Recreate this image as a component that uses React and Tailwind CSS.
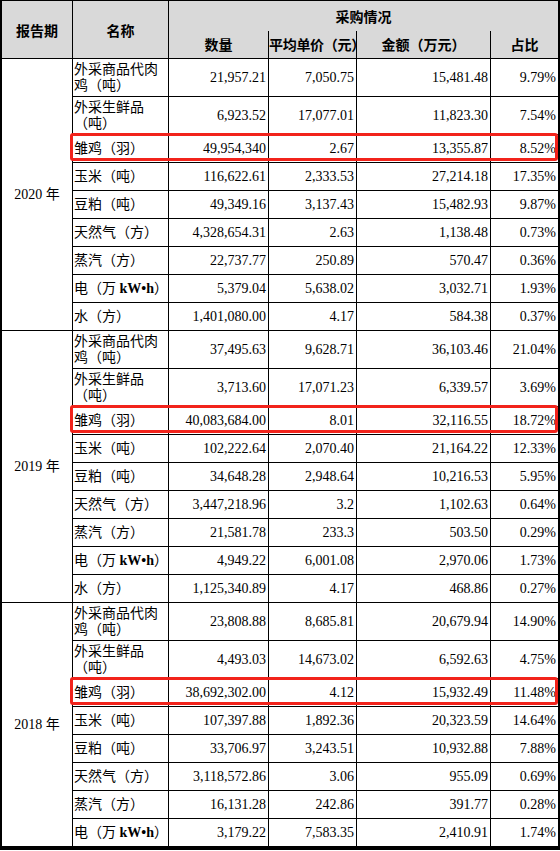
import React from "react";

const blocks = [
  {
    year: "2020 年",
    rows: [
      ["外采商品代肉", "鸡（吨）", "21,957.21", "7,050.75", "15,481.48", "9.79%"],
      ["外采生鲜品", "（吨）", "6,923.52", "17,077.01", "11,823.30", "7.54%"],
      ["雏鸡（羽）", null, "49,954,340", "2.67", "13,355.87", "8.52%", true],
      ["玉米（吨）", null, "116,622.61", "2,333.53", "27,214.18", "17.35%"],
      ["豆粕（吨）", null, "49,349.16", "3,137.43", "15,482.93", "9.87%"],
      ["天然气（方）", null, "4,328,654.31", "2.63", "1,138.48", "0.73%"],
      ["蒸汽（方）", null, "22,737.77", "250.89", "570.47", "0.36%"],
      ["ELEC", null, "5,379.04", "5,638.02", "3,032.71", "1.93%"],
      ["水（方）", null, "1,401,080.00", "4.17", "584.38", "0.37%"],
    ],
  },
  {
    year: "2019 年",
    rows: [
      ["外采商品代肉", "鸡（吨）", "37,495.63", "9,628.71", "36,103.46", "21.04%"],
      ["外采生鲜品", "（吨）", "3,713.60", "17,071.23", "6,339.57", "3.69%"],
      ["雏鸡（羽）", null, "40,083,684.00", "8.01", "32,116.55", "18.72%", true],
      ["玉米（吨）", null, "102,222.64", "2,070.40", "21,164.22", "12.33%"],
      ["豆粕（吨）", null, "34,648.28", "2,948.64", "10,216.53", "5.95%"],
      ["天然气（方）", null, "3,447,218.96", "3.2", "1,102.63", "0.64%"],
      ["蒸汽（方）", null, "21,581.78", "233.3", "503.50", "0.29%"],
      ["ELEC", null, "4,949.22", "6,001.08", "2,970.06", "1.73%"],
      ["水（方）", null, "1,125,340.89", "4.17", "468.86", "0.27%"],
    ],
  },
  {
    year: "2018 年",
    rows: [
      ["外采商品代肉", "鸡（吨）", "23,808.88", "8,685.81", "20,679.94", "14.90%"],
      ["外采生鲜品", "（吨）", "4,493.03", "14,673.02", "6,592.63", "4.75%"],
      ["雏鸡（羽）", null, "38,692,302.00", "4.12", "15,932.49", "11.48%", true],
      ["玉米（吨）", null, "107,397.88", "1,892.36", "20,323.59", "14.64%"],
      ["豆粕（吨）", null, "33,706.97", "3,243.51", "10,932.88", "7.88%"],
      ["天然气（方）", null, "3,118,572.86", "3.06", "955.09", "0.69%"],
      ["蒸汽（方）", null, "16,131.28", "242.86", "391.77", "0.28%"],
      ["ELEC", null, "3,179.22", "7,583.35", "2,410.91", "1.74%"],
    ],
  },
];

const cell = "border border-black p-0";
const num = "border border-black pr-[2px] pl-0 text-right align-middle whitespace-nowrap";

function Name({ a, b, hl }) {
  let content;
  if (a === "ELEC") {
    content = (
      <span>
        电（万 <span className="font-bold">kW•h</span>）
      </span>
    );
  } else if (b) {
    content = (
      <span>
        {a}
        <br />
        {b}
      </span>
    );
  } else {
    content = a;
  }
  return (
    <td className={`${cell} relative pl-[1px] text-left align-middle leading-[16px] whitespace-nowrap`}>
      {content}
      {hl && (
        <div className="absolute left-[-3px] top-[-2px] h-[28px] w-[488px] rounded-[3px] border-[3px] border-[#f2231b] pointer-events-none" />
      )}
    </td>
  );
}

export default function App() {
  return (
    <div className="w-[560px] h-[851px] bg-white overflow-hidden">
      <div className="w-[560px] border-l border-r-2 border-b-[3px] border-black">
        <table
          className="w-[557px] table-fixed border-collapse text-[14px] text-black"
          style={{ fontFamily: '"Liberation Serif", "Noto Sans CJK SC", serif' }}
        >
          <colgroup>
            <col className="w-[71px]" />
            <col className="w-[96px]" />
            <col className="w-[100px]" />
            <col className="w-[88px]" />
            <col className="w-[134px]" />
            <col className="w-[68px]" />
          </colgroup>
          <thead
            className="bg-[#d9d9d9] font-bold"
            style={{ fontFamily: '"Noto Sans CJK SC", sans-serif' }}
          >
            <tr className="h-[30px]">
              <th rowSpan={2} className={`${cell} text-center align-middle pt-[2px]`}>报告期</th>
              <th rowSpan={2} className={`${cell} text-center align-middle pt-[2px]`}>名称</th>
              <th colSpan={4} className={`${cell} border-b-0 text-center align-middle pt-[2px]`}>采购情况</th>
            </tr>
            <tr className="h-[28px]">
              <th className={`${cell} border-t-0 text-center align-middle`}>数量</th>
              <th className={`${cell} border-t-0 text-center align-middle whitespace-nowrap tracking-[-0.3px]`}>平均单价（元）</th>
              <th className={`${cell} border-t-0 text-center align-middle`}>金额（万元）</th>
              <th className={`${cell} border-t-0 text-center align-middle`}>占比</th>
            </tr>
          </thead>
          <tbody className="font-normal">
            {blocks.map((blk) =>
              blk.rows.map((r, i) => (
                <tr key={blk.year + i} className={r[1] ? "h-[38px]" : "h-[28px]"}>
                  {i === 0 && (
                    <td rowSpan={blk.rows.length} className={`${cell} text-center align-middle whitespace-nowrap`}>
                      {blk.year}
                    </td>
                  )}
                  <Name a={r[0]} b={r[1]} hl={r[6]} />
                  <td className={num}>{r[2]}</td>
                  <td className={num}>{r[3]}</td>
                  <td className={num}>{r[4]}</td>
                  <td className={`${num} pr-[1px]`}>{r[5]}</td>
                </tr>
              ))
            )}
          </tbody>
        </table>
      </div>
    </div>
  );
}
